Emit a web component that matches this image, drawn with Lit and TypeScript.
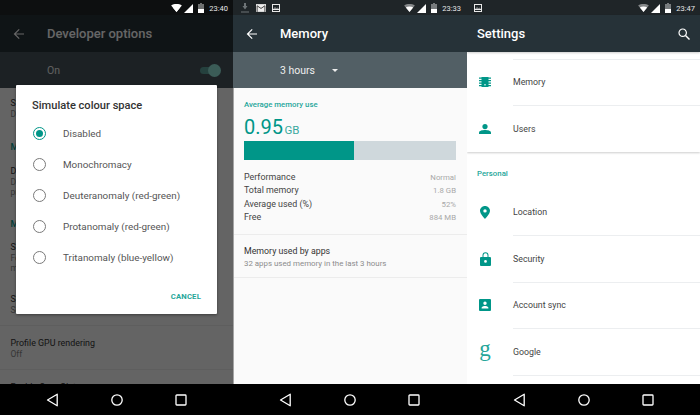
import { LitElement, html, css } from "lit";
import { customElement } from "lit/decorators.js";

const wifi = (full: boolean) => html`<svg class="si wifi" width="11" height="8" viewBox="0 0 12 9">
  <path d="M0 1.600C1.600.5 3.700 0 6 0s4.400.5 6 1.600L6 9z" fill="#fff" opacity="${full ? 1 : 0.45}"/>
  <path d="M1.900 3.900C3 3.100 4.400 2.700 6 2.700s3 .4 4.100 1.200L6 9z" fill="#fff"/></svg>`;
const cell = html`<svg class="si cell" width="9" height="9" viewBox="0 0 9 9"><path d="M9 0v9H0z" fill="#fff"/></svg>`;
const batt = html`<svg class="si batt" width="6" height="10" viewBox="0 0 6 10">
  <path d="M2 0h2v1h2v9H0V1h2z" fill="#fff" opacity=".4"/><path d="M0 6h6v4H0z" fill="#fff"/></svg>`;
const pic = html`<svg class="si" width="8" height="8" viewBox="0 0 8 8"><path fill-rule="evenodd" d="M0 0h8v8H0zM1 1v4h6V1zM1 6v1h6V6z" fill="#e8e8e8"/><path d="M1 5l2-2 1.500 1.200L5.500 3.500 7 5z" fill="#e8e8e8" opacity=".5"/></svg>`;
const gmail = html`<svg class="si" width="10" height="8" viewBox="0 0 9 7"><path d="M0 0h9v7H0z" fill="#eee"/><path d="M1 7V1.500l3.500 2.400L8 1.500V7" fill="none" stroke="#444" stroke-width=".9"/></svg>`;
const dl = html`<svg class="si" width="8" height="10" viewBox="0 0 8 10"><path d="M3 0h2v3h1.500L4 6.500 1.500 3H3zM0 8.500h8V9.500H0z" fill="#6e7477"/></svg>`;
const arrow = (c: string) => html`<svg width="12" height="12" viewBox="0 0 12 12"><path d="M11 6H1.800M6.200 1.300 1.500 6l4.700 4.700" fill="none" stroke="${c}" stroke-width="1.200"/></svg>`;
const rowIcons: Record<string, any> = {
  memory: html`<svg width="12" height="10" viewBox="0 0 12 10"><path d="M2.500 0h7v10h-7zM0 .5h12v1.300H0zM0 3h12v1.300H0zM0 5.500h12v1.300H0zM0 8h12v1.300H0z" fill="#009688"/><path d="M5 7h2v1.500H5z" fill="#8fd6cf"/></svg>`,
  user: html`<svg width="12" height="10" viewBox="0 0 12 10"><circle cx="6" cy="2.600" r="2.600" fill="#009688"/><path d="M0 10V8.500c0-1.800 3.500-2.500 6-2.500s6 .7 6 2.500V10z" fill="#009688"/></svg>`,
  pin: html`<svg width="10" height="13" viewBox="0 0 10 13"><path fill-rule="evenodd" d="M5 0C2.200 0 0 2.200 0 4.800 0 8 5 13 5 13s5-5 5-8.200C10 2.200 7.800 0 5 0zm0 3.200a1.700 1.700 0 1 1 0 3.400 1.700 1.700 0 0 1 0-3.400z" fill="#009688"/></svg>`,
  lock: html`<svg width="11" height="14" viewBox="0 0 11 14"><path fill-rule="evenodd" d="M1 5h1.500V3.200a3 3 0 0 1 6 0V5H10a1 1 0 0 1 1 1v7a1 1 0 0 1-1 1H1a1 1 0 0 1-1-1V6a1 1 0 0 1 1-1zm2.500 0h4V3.200a2 2 0 0 0-4 0zM5.500 8a1.400 1.400 0 1 0 0 2.800 1.400 1.400 0 0 0 0-2.800z" fill="#009688"/></svg>`,
  acct: html`<svg width="12" height="12" viewBox="0 0 12 12"><path fill-rule="evenodd" d="M1 0h10a1 1 0 0 1 1 1v10a1 1 0 0 1-1 1H1a1 1 0 0 1-1-1V1a1 1 0 0 1 1-1zm5 2.600a1.700 1.700 0 1 0 0 3.400 1.700 1.700 0 0 0 0-3.400zM2.600 9.500h6.800V8.700C9.400 7.500 7.300 6.900 6 6.900s-3.400.6-3.400 1.800z" fill="#009688"/></svg>`,
  g: html`<span class="glogo">g</span>`,
};

@customElement("app-root")
export class AppRoot extends LitElement {
  static styles = css`
    :host { display: grid; grid-template-columns: 233px 234px 233px; width: 700px; height: 415px;
      font-family: Roboto, "Liberation Sans", sans-serif; overflow: hidden; background: #000; }
    .panel { position: relative; display: flex; flex-direction: column; height: 415px; overflow: hidden; background: #fafafa; }
    .status { height: 15px; flex: none; box-sizing: border-box; padding: 1px 5px 0 8px; background: #1f2528; display: flex; align-items: center; color: #fff;
      font-size: 7.500px; gap: 6.500px; }
    .status.top { position: relative; z-index: 5; background: #0d0f10; }
    .status.mid { padding-right: 6px; }
    .status.right { padding-left: 7px; }
    .status .sp { flex: 1; }
    .status .time { color: #e8e8e8; margin-left: -1.500px; }
    .si { display: block; flex: none; }
    .status .wifi { margin-right: -4.500px; }
    .status .cell { margin-right: -1.500px; }
    .bar { height: 37px; flex: none; background: #263238; display: flex; align-items: center; color: #fff; font-size: 13px; font-weight: 500; position: relative; z-index: 2; }
    .bar .back { width: 47px; padding-left: 13px; box-sizing: border-box; display: flex; }
    .settings-bar { padding: 0 10px; justify-content: space-between; box-shadow: 0 1px 2px rgba(0,0,0,.2); }
    .sub { height: 36px; flex: none; display: flex; align-items: center; padding-left: 47px; font-size: 10.500px; color: #eee; background: #525f65; }
    .sub.dark { justify-content: space-between; background: #46545b; padding-right: 12px; }
    .caret { width: 0; height: 0; border: 3px solid transparent; border-top: 3.500px solid #eee; border-bottom: 0; margin-left: 17px; }
    .switch { position: relative; width: 21px; height: 13px; }
    .switch i { position: absolute; left: 0; right: 4px; top: 3px; height: 7px; border-radius: 3.500px; background: #5ea39c; }
    .switch b { position: absolute; right: 0; top: 0; width: 13px; height: 13px; border-radius: 50%; background: #93e6da; }
    .content { flex: 1; min-height: 0; overflow: hidden; }
    .nav { height: 31px; flex: none; background: #000; display: flex; align-items: center; justify-content: center; gap: 48px; }
    .nav svg { display: block; }

    .scrim { position: absolute; left: 0; right: 0; top: 0; height: 384px; background: rgba(0,0,0,.6); z-index: 3; }
    .dialog { position: absolute; left: 16px; top: 85px; width: 201px; height: 229px; background: #fff; z-index: 4; border-radius: 1px;
      box-shadow: 0 1px 3px rgba(0,0,0,.4); display: flex; flex-direction: column; box-sizing: border-box; padding: 14px 16px 0; }
    .dialog h2 { margin: 0 0 5px; font-size: 11.100px; line-height: 14px; font-weight: 500; color: #333; }
    .opt { height: 31px; display: flex; align-items: center; gap: 17px; font-size: 9.900px; color: #555; margin-left: 1px; }
    .radio { width: 13px; height: 13px; box-sizing: border-box; border-radius: 50%; border: 1.300px solid #7a7a7a; flex: none; position: relative; }
    .radio.on { border-color: #009688; }
    .radio.on::after { content: ""; position: absolute; inset: 2px; border-radius: 50%; background: #009688; }
    .cancel { align-self: flex-end; margin-top: 19px; font-size: 7.700px; font-weight: 700; color: #26a69a; letter-spacing: .2px; }

    .dev { background: #fafafa; padding-left: 10.500px; }
    .dev .t { font-size: 8.900px; line-height: 12px; color: #333; }
    .dev .s { font-size: 8.500px; line-height: 10.500px; color: #888; }
    .dev .h { font-size: 9px; line-height: 11px; color: #009688; font-weight: 500; }
    .dev .line { height: 1px; background: #ececec; margin-left: -10.500px; }

    .mem { border-left: 1px solid #a5a5a5; box-sizing: border-box; }
    .avg { padding: 11px 11px 0 10px; }
    .avg .lbl { font-size: 7.800px; line-height: 11px; font-weight: 500; color: #26a69a; }
    .avg .val { height: 24px; font-size: 20px; line-height: 24px; margin-top: 5px; color: #009688; font-weight: 400; }
    .avg .val span { font-size: 11.500px; line-height: 1; margin-left: 1.500px; color: #3ba99e; }
    .meter { display: flex; height: 18.500px; margin-top: 2px; background: #cfd8dc; }
    .meter div { background: #009688; }
    .kv { margin-top: 11.500px; padding-bottom: 9px; }
    .kv div { display: flex; justify-content: space-between; height: 13.400px; line-height: 13.400px; font-size: 8.900px; color: #444; }
    .kv span { font-size: 7.800px; color: #a8a8a8; }
    .divider { height: 1px; background: #ececec; }
    .apps { padding: 10.500px 11px 8px 10px; }
    .apps .t { font-size: 8.800px; line-height: 12.500px; color: #333; }
    .apps .s { font-size: 7.900px; line-height: 11px; color: #8c8c8c; }

    .set { background: #fff; }
    .card { background: #fff; box-shadow: 0 1px 2px rgba(0,0,0,.2); padding-top: 6.500px; height: 100px; box-sizing: border-box; }
    .rule { height: 1px; background: #eceef0; margin-left: 46px; }
    .row { height: 45.500px; display: flex; align-items: center; font-size: 8.800px; color: #444; }
    .row .ic { width: 36px; display: flex; justify-content: center; flex: none; margin-right: 10px; }
    .glogo { font-family: "Liberation Serif", serif; font-size: 23px; line-height: 16px; height: 16px; color: #26a69a; transform: translateY(-3px); }
    .personal { font-size: 7.800px; font-weight: 500; color: #26a69a; padding: 16px 0 0 10px; line-height: 11px; height: 21.500px; }
  `;

  status(left: any[], time: string, full: boolean, cls: string) {
    return html`<div class="status ${cls}">${left}<div class="sp"></div>${wifi(full)}${cell}${batt}<span class="time">${time}</span></div>`;
  }
  nav() {
    return html`<div class="nav">
      <svg width="16" height="14" viewBox="0 0 16 14"><path d="M12.200 1.200v11.600L2.500 7z" fill="none" stroke="#fff" stroke-width="1.300" stroke-linejoin="round"/></svg>
      <svg width="16" height="14" viewBox="0 0 16 14"><circle cx="8" cy="7" r="5.200" fill="none" stroke="#fff" stroke-width="1.300"/></svg>
      <svg width="16" height="14" viewBox="0 0 16 14"><rect x="3" y="2" width="10" height="10" rx=".8" fill="none" stroke="#fff" stroke-width="1.300"/></svg>
    </div>`;
  }
  row(icon: string, label: string) {
    return html`<div class="row"><div class="ic">${rowIcons[icon]}</div>${label}</div>`;
  }

  panel1() {
    return html`<div class="panel">
      ${this.status([], "23:40", true, "top")}
      <div class="bar"><div class="back">${arrow("#fff")}</div>Developer options</div>
      <div class="sub dark"><span>On</span><div class="switch"><i></i><b></b></div></div>
      <div class="content dev">
        <div style="height:9px"></div>
        <div class="t">Strict mode</div>
        <div class="s">Disabled</div>
        <div style="height:22px"></div>
        <div class="h">Monitoring</div>
        <div style="height:12px"></div>
        <div class="t">Debug GPU overdraw</div>
        <div class="s">Disabled</div>
        <div class="s">presentation</div>
        <div style="height:21px"></div>
        <div class="h">Media</div>
        <div style="height:11px"></div>
        <div class="t">Simulate colour space</div>
        <div class="s">Force</div>
        <div class="s">modes</div>
        <div style="height:19px"></div>
        <div class="t">Show CPU usage</div>
        <div class="s">Screen</div>
        <div style="height:10px"></div>
        <div class="line"></div>
        <div style="height:11px"></div>
        <div class="t">Profile GPU rendering</div>
        <div class="s">Off</div>
        <div style="height:9px"></div>
        <div class="line"></div>
        <div style="height:11px"></div>
        <div class="t">Enable OpenGL traces</div>
      </div>
      ${this.nav()}
      <div class="scrim"></div>
      <div class="dialog">
        <h2>Simulate colour space</h2>
        ${["Disabled", "Monochromacy", "Deuteranomaly (red-green)", "Protanomaly (red-green)", "Tritanomaly (blue-yellow)"].map(
          (o, i) => html`<div class="opt"><div class="radio ${i === 0 ? "on" : ""}"></div>${o}</div>`)}
        <div class="cancel">CANCEL</div>
      </div>
    </div>`;
  }

  panel2() {
    const kv = [["Performance", "Normal"], ["Total memory", "1.8 GB"], ["Average used (%)", "52%"], ["Free", "884 MB"]];
    return html`<div class="panel">
      ${this.status([dl, gmail, pic], "23:33", false, "mid")}
      <div class="bar"><div class="back">${arrow("#fff")}</div>Memory</div>
      <div class="sub">3 hours<div class="caret"></div></div>
      <div class="content mem">
        <div class="avg">
          <div class="lbl">Average memory use</div>
          <div class="val">0.95<span>GB</span></div>
          <div class="meter"><div style="width:52%"></div></div>
          <div class="kv">${kv.map(([k, v]) => html`<div>${k}<span>${v}</span></div>`)}</div>
        </div>
        <div class="divider"></div>
        <div class="apps"><div class="t">Memory used by apps</div><div class="s">32 apps used memory in the last 3 hours</div></div>
        <div class="divider"></div>
      </div>
      ${this.nav()}
    </div>`;
  }

  panel3() {
    return html`<div class="panel">
      ${this.status([pic], "23:47", false, "right")}
      <div class="bar settings-bar">Settings
        <svg width="12" height="12" viewBox="0 0 12 12"><circle cx="4.700" cy="4.700" r="3.700" fill="none" stroke="#fff" stroke-width="1.200"/><path d="M7.500 7.500 11.500 11.500" stroke="#fff" stroke-width="1.400"/></svg>
      </div>
      <div class="content set">
        <div class="card">
          <div class="rule"></div>
          ${this.row("memory", "Memory")}
          <div class="rule"></div>
          ${this.row("user", "Users")}
        </div>
        <div class="personal">Personal</div>
        ${this.row("pin", "Location")}<div class="rule"></div>
        ${this.row("lock", "Security")}<div class="rule"></div>
        ${this.row("acct", "Account sync")}<div class="rule"></div>
        ${this.row("g", "Google")}<div class="rule"></div>
      </div>
      ${this.nav()}
    </div>`;
  }

  render() {
    return html`${this.panel1()}${this.panel2()}${this.panel3()}`;
  }
}
